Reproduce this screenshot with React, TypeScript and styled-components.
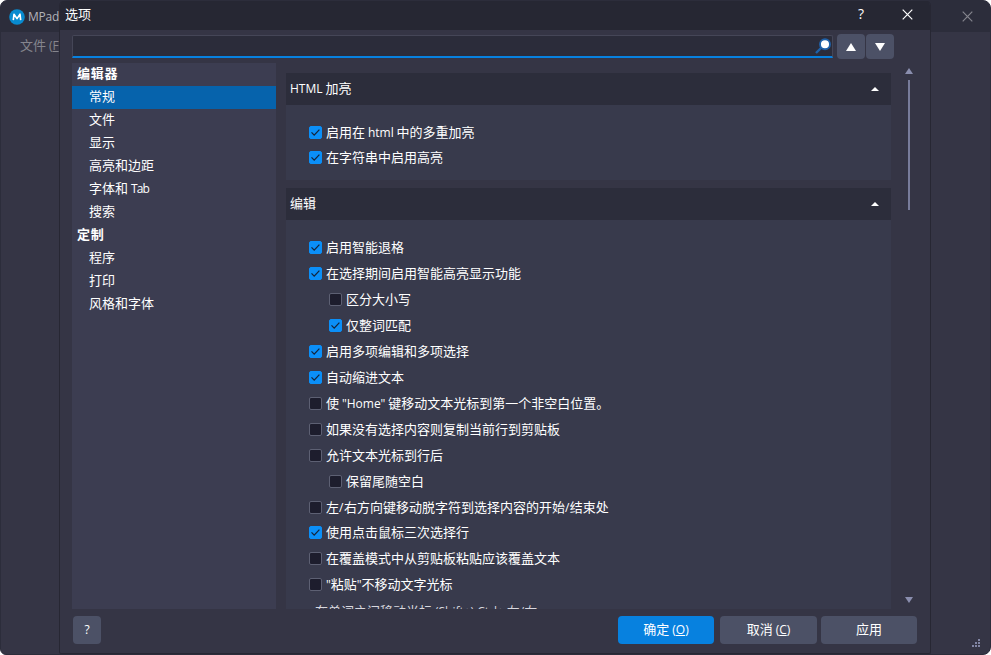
import React from "react";
import styled, { createGlobalStyle, css } from "styled-components";

const GlobalStyle = createGlobalStyle`
  * { box-sizing: border-box; }
  body {
    margin: 0;
    background: #fff;
    font: 13px/18px "Noto Sans CJK SC", sans-serif;
    color: #fff;
  }
`;

const MainWindow = styled.div`
  position: relative;
  width: 991px;
  height: 655px;
  border-radius: 7px 8px 8px 6px;
  border: 1px solid #2c2d3b;
  background: #353545;
  overflow: hidden;
`;

const MainTitleBar = styled.header`
  display: flex;
  align-items: center;
  justify-content: space-between;
  height: 31px;
  padding: 0 17px 0 8px;
  background: #2c2d3b;
  color: #b3b3b9;
`;

const AppName = styled.div`
  display: flex;
  align-items: center;
  gap: 3px;
`;

const MenuBar = styled.nav`
  padding: 4px 0 0 19px;
  color: #85858d;
`;

const Latin = styled.span<{ $size?: number; $spacing?: number }>`
  font-family: "Open Sans", sans-serif;
  font-size: ${(p) => p.$size ?? 12}px;
  letter-spacing: ${(p) => p.$spacing ?? 0}px;
`;

const Dialog = styled.div`
  position: absolute;
  left: 58px;
  top: -1px;
  width: 872px;
  height: 654px;
  display: flex;
  flex-direction: column;
  border: solid #272733;
  border-width: 0 1px 1px;
  border-radius: 6px 6px 2px 2px;
  background: #353545;
  overflow: hidden;
`;

const DialogTitle = styled.header`
  display: flex;
  align-items: center;
  height: 30px;
  flex: none;
  padding: 0 17px 2px 5px;
  background: #262733;
`;

const TitleText = styled.span`
  flex: 1;
  margin-top: -1px;
`;

const HelpMark = styled.span`
  width: 44px;
  font: 14px/18px "Open Sans", sans-serif;
`;

const SearchRow = styled.div`
  display: flex;
  align-items: flex-start;
  height: 33px;
  flex: none;
  padding: 4px 35px 0 12px;
`;

const SearchField = styled.div`
  display: flex;
  justify-content: flex-end;
  flex: 1;
  height: 23px;
  margin: 1px 4px 0 0;
  padding-top: 1px;
  border: 1px solid #454657;
  border-bottom: 2px solid #0781df;
  border-radius: 2px 2px 0 0;
  background: #2b2c3a;
`;

const StepButton = styled.button`
  display: grid;
  place-items: center;
  width: 28px;
  height: 25px;
  margin-right: 1px;
  padding: 1px 0 0;
  border: 0;
  border-radius: 4px;
  background: #4c5166;
`;

const Content = styled.main`
  display: flex;
  height: 546px;
  flex: none;
  padding-left: 12px;
`;

const Sidebar = styled.aside`
  width: 204px;
  margin-right: 10px;
  background: #3c3d51;
`;

const Category = styled.div<{ $group?: boolean; $active?: boolean }>`
  height: 23px;
  padding-left: 17px;
  line-height: 20px;
  ${(p) => p.$group && css`padding-left: 5px; font-weight: 700; letter-spacing: 0.8px;`}
  ${(p) => p.$active && css`background: #0663ac;`}
`;

const Sections = styled.div`
  display: flex;
  flex-direction: column;
  gap: 8px;
  width: 605px;
  padding-top: 10px;
  overflow: hidden;
`;

const Section = styled.section`
  flex: none;
  background: #383a4c;
`;

const SectionHeader = styled.h2`
  display: flex;
  align-items: center;
  justify-content: space-between;
  height: 32px;
  margin: 0;
  padding: 0 12px 1px 4px;
  background: #2c2d3b;
  font-size: 13px;
  font-weight: 400;
`;

const SectionTitle = styled.span`
  margin-top: -1px;
`;

const Options = styled.div<{ $top: number; $height: number }>`
  display: flex;
  flex-direction: column;
  height: ${(p) => p.$height}px;
  padding: ${(p) => p.$top}px 0 0 23px;
`;

const OptionRow = styled.label<{ $nested?: boolean; $height: number }>`
  display: flex;
  align-items: flex-start;
  flex: none;
  gap: 4px;
  height: ${(p) => p.$height}px;
  margin-left: ${(p) => (p.$nested ? 20 : 0)}px;
  white-space: nowrap;
`;

const OptionText = styled.span`
  margin-top: -3px;
`;

const Box = styled.span<{ $on?: boolean }>`
  display: grid;
  place-items: center;
  width: 13px;
  height: 13px;
  flex: none;
  border: 1px solid ${(p) => (p.$on ? "#0b8ff8" : "#5d6073")};
  border-radius: 2px;
  background: ${(p) => (p.$on ? "#0b8ff8" : "#1d1d2d")};
`;

const ComboLabel = styled.div`
  margin-top: -2px;
  padding-left: 6px;
  white-space: nowrap;
  color: #d8d8df;
`;

const ScrollBar = styled.div`
  display: flex;
  flex-direction: column;
  align-items: center;
  width: 10px;
  margin-left: 13px;
  padding: 5px 0 6px;
`;

const ScrollThumb = styled.div`
  width: 2px;
  height: 130px;
  margin: 6px 0 auto;
  background: #787c9b;
`;

const Footer = styled.footer`
  display: flex;
  height: 35px;
  padding: 7px 13px 0;
`;

const Button = styled.button<{ $width: number; $primary?: boolean; $gap?: number }>`
  width: ${(p) => p.$width}px;
  height: 28px;
  margin: 0 ${(p) => p.$gap ?? 0}px 0 0;
  padding: 0 0 2px;
  border: 0;
  border-radius: 4px;
  background: ${(p) => (p.$primary ? "#0781df" : "#4c5166")};
  color: #fff;
  font: inherit;
`;

const Spacer = styled.div`
  flex: 1;
`;

const Grip = styled.svg`
  position: absolute;
  right: 10px;
  bottom: 7px;
`;

const Shape = styled.svg`
  display: block;
  flex: none;
`;

const Triangle = ({ w, h, down, fill = "#fff" }: { w: number; h: number; down?: boolean; fill?: string }) => (
  <Shape width={w} height={h}>
    <path d={down ? `M0 0H${w}L${w / 2} ${h}Z` : `M0 ${h}H${w}L${w / 2} 0Z`} fill={fill} />
  </Shape>
);

const Cross = ({ color }: { color: string }) => (
  <Shape width="11" height="11" viewBox="0 0 11 11">
    <path d="M.7.7l9.6 9.6M10.3.7L.7 10.3" stroke={color} strokeWidth="1.2" fill="none" />
  </Shape>
);

const Logo = () => (
  <Shape width="16" height="16" viewBox="0 0 16 16">
    <circle cx="8" cy="8" r="7.8" fill="#088bd0" />
    <path d="M4.3 11.2L5 5.2L8 9.6L11 5.2L11.7 11.2" stroke="#fff" strokeWidth="1.6" strokeLinejoin="round" fill="none" />
  </Shape>
);

const Magnifier = () => (
  <Shape width="17" height="17" viewBox="0 0 17 17">
    <path d="M6.5 10.5L1 16" stroke="#1f61a8" strokeWidth="2.4" />
    <circle cx="10" cy="7.2" r="5" fill="#fff" stroke="#1f61a8" strokeWidth="1.9" />
  </Shape>
);

const Check = () => (
  <Shape width="11" height="11" viewBox="0 0 11 11">
    <path d="M1.5 5.4L4.2 8.1 9.4 2.6" fill="none" stroke="#14243c" strokeWidth="1.3" />
  </Shape>
);

type Option = { text: React.ReactNode; on?: boolean; nested?: boolean; height?: number };

const highlightOptions: Option[] = [
  { text: <>启用在 <Latin>html</Latin> 中的多重加亮</>, on: true, height: 25 },
  { text: "在字符串中启用高亮", on: true },
];

const editOptions: Option[] = [
  { text: "启用智能退格", on: true },
  { text: "在选择期间启用智能高亮显示功能", on: true },
  { text: "区分大小写", nested: true },
  { text: "仅整词匹配", on: true, nested: true },
  { text: "启用多项编辑和多项选择", on: true },
  { text: "自动缩进文本", on: true },
  { text: <>使 <Latin>"Home"</Latin> 键移动文本光标到第一个非空白位置。</> },
  { text: "如果没有选择内容则复制当前行到剪贴板" },
  { text: "允许文本光标到行后" },
  { text: "保留尾随空白", nested: true },
  { text: <>左<Latin $spacing={0.5}>/</Latin>右方向键移动脱字符到选择内容的开始<Latin $spacing={0.5}>/</Latin>结束处</>, height: 25 },
  { text: "使用点击鼠标三次选择行", on: true },
  { text: "在覆盖模式中从剪贴板粘贴应该覆盖文本" },
  { text: <><Latin>"</Latin>粘贴<Latin>"</Latin>不移动文字光标</> },
];

const categories: { text: React.ReactNode; group?: boolean; active?: boolean }[] = [
  { text: "编辑器", group: true },
  { text: "常规", active: true },
  { text: "文件" },
  { text: "显示" },
  { text: "高亮和边距" },
  { text: <>字体和 <Latin $spacing={-0.9}>Tab</Latin></> },
  { text: "搜索" },
  { text: "定制", group: true },
  { text: "程序" },
  { text: "打印" },
  { text: "风格和字体" },
];

const OptionList = ({ items }: { items: Option[] }) => (
  <>
    {items.map((o, i) => (
      <OptionRow key={i} $nested={o.nested} $height={o.height ?? 26}>
        <Box $on={o.on}>{o.on && <Check />}</Box>
        <OptionText>{o.text}</OptionText>
      </OptionRow>
    ))}
  </>
);

export default function App() {
  return (
    <>
      <GlobalStyle />
      <MainWindow>
        <MainTitleBar>
          <AppName>
            <Logo />
            <Latin $spacing={-0.2}>MPad</Latin>
          </AppName>
          <Cross color="#85858d" />
        </MainTitleBar>
        <MenuBar>
          文件 <Latin>(<u>F</u>)</Latin>
        </MenuBar>
        <Grip width="8" height="8" fill="#8286a5">
          <path d="M6 0h2v2H6zM3 3h2v2H3zM6 3h2v2H6zM0 6h2v2H0zM3 6h2v2H3zM6 6h2v2H6z" />
        </Grip>

        <Dialog>
          <DialogTitle>
            <TitleText>选项</TitleText>
            <HelpMark>?</HelpMark>
            <Cross color="#fff" />
          </DialogTitle>
          <SearchRow>
            <SearchField>
              <Magnifier />
            </SearchField>
            <StepButton><Triangle w={10} h={8} /></StepButton>
            <StepButton><Triangle w={10} h={8} down /></StepButton>
          </SearchRow>
          <Content>
            <Sidebar>
              {categories.map((c, i) => (
                <Category key={i} $group={c.group} $active={c.active}>{c.text}</Category>
              ))}
            </Sidebar>
            <Sections>
              <Section>
                <SectionHeader>
                  <SectionTitle><Latin>HTML</Latin> 加亮</SectionTitle>
                  <Triangle w={8} h={4} />
                </SectionHeader>
                <Options $top={21} $height={75}>
                  <OptionList items={highlightOptions} />
                </Options>
              </Section>
              <Section>
                <SectionHeader>
                  <SectionTitle>编辑</SectionTitle>
                  <Triangle w={8} h={4} />
                </SectionHeader>
                <Options $top={21} $height={420}>
                  <OptionList items={editOptions} />
                  <ComboLabel>在单词之间移动光标 <Latin>(Shift+) Ctrl+</Latin> 左<Latin>/</Latin>右</ComboLabel>
                </Options>
              </Section>
            </Sections>
            <ScrollBar>
              <Triangle w={8} h={6} fill="#8a8eae" />
              <ScrollThumb />
              <Triangle w={8} h={6} down fill="#8a8eae" />
            </ScrollBar>
          </Content>
          <Footer>
            <Button $width={28}><Latin>?</Latin></Button>
            <Spacer />
            <Button $width={96} $primary $gap={6}>确定 <Latin>(<u>O</u>)</Latin></Button>
            <Button $width={97} $gap={4}>取消 <Latin>(<u>C</u>)</Latin></Button>
            <Button $width={96}>应用</Button>
          </Footer>
        </Dialog>
      </MainWindow>
    </>
  );
}
